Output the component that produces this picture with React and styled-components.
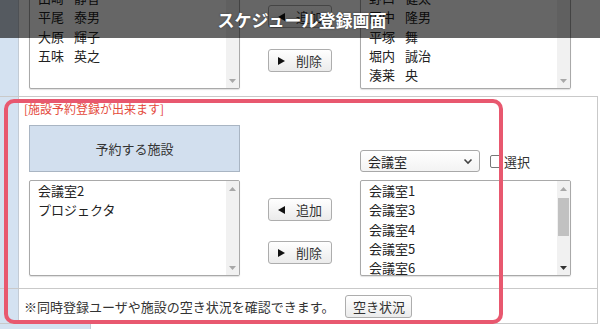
import { styled, createGlobalStyle } from "styled-components";

const GlobalStyle = createGlobalStyle`
  html, body {
    margin: 0;
    padding: 0;
    background: #fff;
  }
  body {
    font-family: "Noto Sans CJK JP", "Noto Sans", sans-serif;
    color: #222;
  }
`;

const Page = styled.div`
  position: relative;
  width: 600px;
  height: 329px;
  overflow: hidden;
  background: #fff;
`;

const Row = styled.div`
  display: flex;
  box-sizing: border-box;
  width: 598px;
  border-bottom: 1px solid #c9c9c9;
  border-right: ${(p) => (p.$boxed ? "1px solid #c9c9c9" : "none")};
`;

const Label = styled.div`
  width: ${(p) => p.$w || 18}px;
  flex-shrink: 0;
  background: #d4e2f1;
  border-right: 1px solid #c3cbd4;
`;

const TopCell = styled.div`
  flex: 1;
  height: 96px;
  box-sizing: border-box;
  display: flex;
  flex-direction: column;
  justify-content: flex-end;
  padding: 0 0 7px 10px;
  overflow: hidden;
`;

const MainCell = styled.div`
  flex: 1;
  display: flex;
  flex-direction: column;
  padding: 3px 0 12px 5px;
`;

const NoteCell = styled.div`
  flex: 1;
  height: 34px;
  display: flex;
  align-items: center;
  gap: 11px;
  padding-left: 5px;
  font-size: 13px;
  color: #333;
`;

const Notice = styled.div`
  font-size: 12px;
  line-height: 18px;
  color: #e44a3c;
`;

const Transfer = styled.div`
  display: grid;
  grid-template-columns: 211px 120px 211px;
  row-gap: 8px;
  margin-left: ${(p) => p.$indent || 0}px;
  margin-top: ${(p) => p.$top || 0}px;
`;

const HeadBox = styled.div`
  height: 47px;
  box-sizing: border-box;
  border: 1px solid #a9b5c3;
  background: #d2dfee;
  display: flex;
  align-items: center;
  justify-content: center;
  font-size: 13px;
  color: #333;
`;

const FilterRow = styled.div`
  grid-column: 3;
  align-self: end;
  display: flex;
  align-items: center;
  white-space: nowrap;
`;

const Select = styled.div`
  width: 120px;
  height: 22px;
  box-sizing: border-box;
  border: 1px solid #a8a8a8;
  border-radius: 3px;
  background: linear-gradient(#fff, #f3f3f3);
  display: flex;
  align-items: center;
  justify-content: space-between;
  padding: 0 6px 0 7px;
  font-size: 13px;
  color: #222;
`;

const Check = styled.span`
  width: 11px;
  height: 11px;
  margin-left: 10px;
  border: 1px solid #777;
  border-radius: 2px;
  background: #fff;
`;

const CheckText = styled.span`
  font-size: 13px;
  color: #333;
  margin-left: 1px;
`;

const ListBox = styled.div`
  height: ${(p) => p.$h}px;
  box-sizing: border-box;
  border: 1px solid #a9a9a9;
  border-radius: 2px;
  box-shadow: 0 1px 1px rgba(0, 0, 0, 0.12);
  display: flex;
  background: #fff;
  overflow: hidden;
`;

const Items = styled.div`
  flex: 1;
  padding: 0 8px;
  font-size: 13px;
  line-height: 19.3px;
  color: #222;
`;

const Item = styled.div`
  white-space: nowrap;
`;

const Surname = styled.span`
  display: inline-block;
  width: 36px;
`;

const ScrollBar = styled.div`
  width: 13px;
  background: #f1f1f1;
  display: flex;
  flex-direction: column;
`;

const Arrow = styled.div`
  height: 15px;
  display: flex;
  align-items: center;
  justify-content: center;
`;

const Track = styled.div`
  flex: 1;
  padding: 0 1px;
`;

const Thumb = styled.div`
  height: 38px;
  margin-top: 2px;
  background: #c1c1c1;
`;

const Buttons = styled.div`
  display: flex;
  flex-direction: column;
  align-items: center;
  padding-top: 18px;
  gap: ${(p) => p.$gap || 20}px;
`;

const Button = styled.div`
  width: ${(p) => p.$w || 64}px;
  height: 23px;
  box-sizing: border-box;
  border: 1px solid #adadad;
  border-radius: 3px;
  background: linear-gradient(#ffffff, #ebebeb);
  display: flex;
  align-items: center;
  justify-content: center;
  gap: 11px;
  font-size: 13px;
  color: #333;
`;

const Overlay = styled.div`
  position: absolute;
  left: 4px;
  top: 99px;
  width: 499px;
  height: 225px;
  box-sizing: border-box;
  border: 4.5px solid #e8586f;
  border-radius: 10px;
  pointer-events: none;
`;

const TitleBand = styled.div`
  position: absolute;
  left: 0;
  top: 0;
  width: 600px;
  height: 38px;
  background: rgba(0, 0, 0, 0.6);
  display: flex;
  align-items: center;
  justify-content: center;
  color: #fff;
  font-size: 17px;
  font-weight: 700;
  text-shadow: 0 0 2px rgba(0, 0, 0, 0.5);
  padding-left: 2px;
`;

const Tri = ({ dir, color = "#111", w = 7, h = 8 }) => {
  const pts =
    dir === "left"
      ? `${w},0 ${w},${h} 0,${h / 2}`
      : dir === "right"
      ? `0,0 0,${h} ${w},${h / 2}`
      : dir === "up"
      ? `0,${h} ${w},${h} ${w / 2},0`
      : `0,0 ${w},0 ${w / 2},${h}`;
  return (
    <svg width={w} height={h} viewBox={`0 0 ${w} ${h}`}>
      <polygon points={pts} fill={color} />
    </svg>
  );
};

const Chevron = () => (
  <svg width="10" height="7" viewBox="0 0 10 7">
    <polyline points="1.5,1.5 5,5 8.5,1.5" fill="none" stroke="#444" strokeWidth="1.6" />
  </svg>
);

const Scroll = ({ up = true, thumb = false, downColor = "#a8a8a8" }) => (
  <ScrollBar>
    <Arrow>{up && <Tri dir="up" w={7} h={4} color="#a8a8a8" />}</Arrow>
    <Track>{thumb && <Thumb />}</Track>
    <Arrow>
      <Tri dir="down" w={7} h={4} color={downColor} />
    </Arrow>
  </ScrollBar>
);

const NameList = ({ names, h }) => (
  <ListBox $h={h}>
    <Items>
      {names.map(([s, g]) => (
        <Item key={s}>
          <Surname>{s}</Surname>
          {g}
        </Item>
      ))}
    </Items>
    <Scroll up={false} />
  </ListBox>
);

const PlainList = ({ items, h, thumb, downColor }) => (
  <ListBox $h={h}>
    <Items>
      {items.map((t) => (
        <Item key={t}>{t}</Item>
      ))}
    </Items>
    <Scroll thumb={thumb} downColor={downColor} />
  </ListBox>
);

const MoveButtons = ({ gap }) => (
  <Buttons $gap={gap}>
    <Button>
      <Tri dir="left" />
      追加
    </Button>
    <Button>
      <Tri dir="right" />
      削除
    </Button>
  </Buttons>
);

const membersLeft = [
  ["山崎", "静香"],
  ["平尾", "泰男"],
  ["大原", "輝子"],
  ["五味", "英之"],
];

const membersRight = [
  ["野口", "健太"],
  ["田中", "隆男"],
  ["平塚", "舞"],
  ["堀内", "誠治"],
  ["湊莱", "央"],
];

export default function App() {
  return (
    <Page>
      <GlobalStyle />
      <Row>
        <Label />
        <TopCell>
          <Transfer>
            <NameList names={membersLeft} h={102} />
            <MoveButtons gap={21} />
            <NameList names={membersRight} h={102} />
          </Transfer>
        </TopCell>
      </Row>

      <Row $boxed>
        <Label />
        <MainCell>
          <Notice>[施設予約登録が出来ます]</Notice>
          <Transfer $indent={5} $top={7}>
            <HeadBox>予約する施設</HeadBox>
            <FilterRow>
              <Select>
                会議室
                <Chevron />
              </Select>
              <Check />
              <CheckText>選択</CheckText>
            </FilterRow>
            <PlainList items={["会議室2", "プロジェクタ"]} h={96} />
            <MoveButtons gap={20} />
            <PlainList
              items={["会議室1", "会議室3", "会議室4", "会議室5", "会議室6"]}
              h={96}
              thumb
              downColor="#333"
            />
          </Transfer>
        </MainCell>
      </Row>

      <Row $boxed>
        <Label />
        <NoteCell>
          ※同時登録ユーザや施設の空き状況を確認できます。
          <Button $w={67}>空き状況</Button>
        </NoteCell>
      </Row>

      <Row>
        <Label $w={90} style={{ height: 6 }} />
      </Row>

      <Overlay />
      <TitleBand>スケジュール登録画面</TitleBand>
    </Page>
  );
}
